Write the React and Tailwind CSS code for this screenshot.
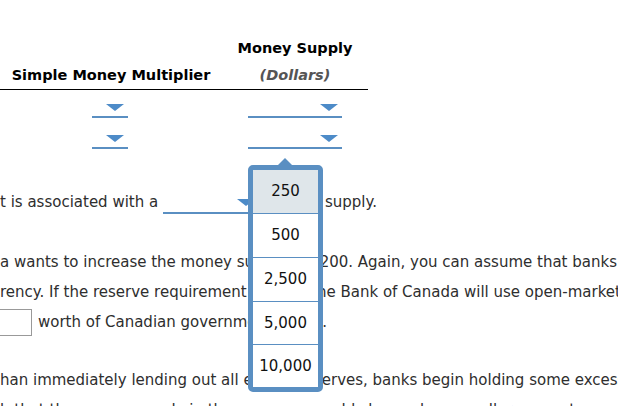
import React from "react";

const BLUE = "#5a8fc2";

function Caret({ className = "" }) {
  return (
    <svg width="18" height="7" viewBox="0 0 18 7" className={className}>
      <polygon points="0,0 18,0 9,7" fill="#4d8bc8" />
    </svg>
  );
}

function Dropdown({ width }) {
  return (
    <div
      className="flex h-[16px] items-start justify-end border-b-2 border-[#5a8fc2] pt-[2px] pr-[4px]"
      style={{ width }}
    >
      <Caret />
    </div>
  );
}

function InlineDropdown({ width }) {
  return (
    <span
      className="inline-flex h-[16px] items-start justify-end border-b-2 border-[#5a8fc2] pt-[1px] pr-[4px] align-[1px]"
      style={{ width }}
    >
      <Caret />
    </span>
  );
}

const options = ["250", "500", "2,500", "5,000", "10,000"];
const heights = ["h-[43px]", "h-[44px]", "h-[44px]", "h-[43px]", "h-[43px]"];

function OptionList() {
  return (
    <div className="absolute left-[248px] top-[158px] w-[75px]">
      <svg width="16" height="8" viewBox="0 0 16 8" className="absolute left-[29px] top-0">
        <polygon points="0,8 8,0 16,8" fill={BLUE} />
      </svg>
      <div className="mt-[7px] overflow-hidden rounded-[5px] border-[5px] border-[#5a8fc2] bg-white text-[15px] text-[#111]">
        {options.map((o, i) => (
          <div
            key={o}
            className={`flex items-center justify-center ${heights[i]} ${
              i === 0 ? "bg-[#dfe6ea]" : "border-t border-[#5a8fc2]"
            }`}
          >
            {o}
          </div>
        ))}
      </div>
    </div>
  );
}

export default function App() {
  return (
    <div
      className="relative h-[406px] w-[618px] overflow-hidden bg-white text-[15px] text-[#2e2e2e]"
      style={{ fontFamily: '"DejaVu Sans", Verdana, sans-serif' }}
    >
      <div className="pt-[36px]">
        <div className="w-[368px]">
          <div className="flex h-[54px] items-end border-b border-black text-[14.5px] font-bold leading-[27px] text-black">
            <div className="w-[222px] text-center">Simple Money Multiplier</div>
            <div className="w-[146px] text-center">
              <div>Money Supply</div>
              <div className="italic text-[#555]">(Dollars)</div>
            </div>
          </div>
          {[0, 1].map((r) => (
            <div key={r} className="flex h-[31px] items-end pb-[3px]">
              <div className="flex w-[222px] justify-center">
                <div className="-translate-x-px">
                  <Dropdown width={36} />
                </div>
              </div>
              <div className="flex w-[146px] justify-center">
                <Dropdown width={94} />
              </div>
            </div>
          ))}
        </div>

        <div className="mt-[35px] whitespace-nowrap leading-[30px]">
          <p>
            t is associated with a <InlineDropdown width={96} />{" "}
            <span className="ml-[5px]">money supply.</span>
          </p>
          <div className="mt-[30px]">
            <p>
              a wants to increase the money supply <span className="-ml-[4px]">by $200.</span> Again, you can assume that banks do not hold excess reserves
            </p>
            <p>rency. If the reserve requirement is 10%, the Bank of Canada will use open-market operations to</p>
            <p className="flex items-center">
              <span className="-ml-[28px] mr-[6px] inline-block h-[27px] w-[60px] border border-[#999]" />
              <span>worth of Canadian government bonds.</span>
            </p>
          </div>
          <div className="mt-[28px]">
            <p>han immediately lending out all excess reserves, banks begin holding some excess reserves.</p>
            <p>h that the money supply in the economy would change by a smaller amount.</p>
          </div>
        </div>
      </div>
      <OptionList />
    </div>
  );
}
